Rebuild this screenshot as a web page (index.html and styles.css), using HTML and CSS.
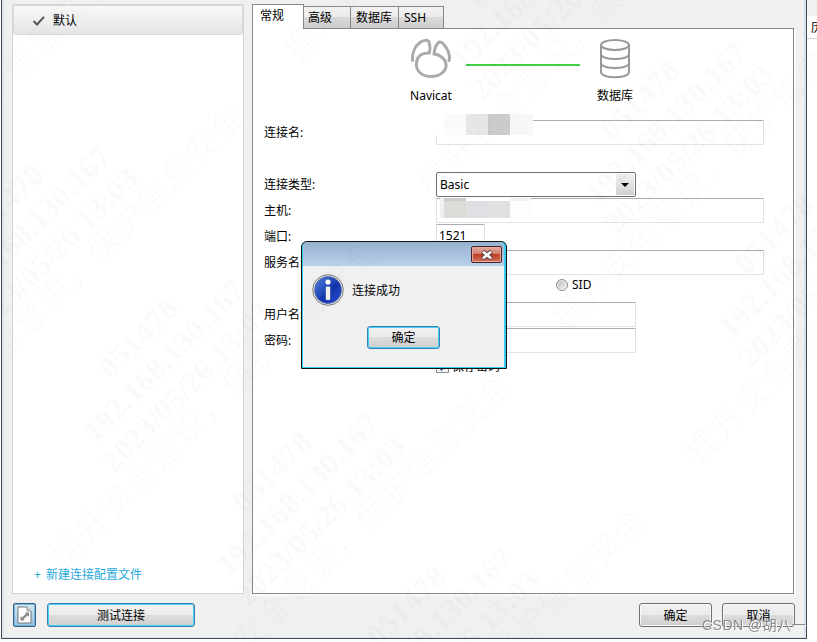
FILE: index.html
```
<!DOCTYPE html>
<html lang="zh-CN">
<head>
    <meta charset="UTF-8">
    <meta name="viewport" content="width=device-width, initial-scale=1.0">
    <title>Navicat</title>
    <link rel="stylesheet" href="styles.css">
</head>
<body>

<div class="desktop">
    <div class="window">
        <div class="main">
            <!-- Profiles -->
            <div class="sidebar">
                <div class="profile">
                    <svg width="14" height="12" viewBox="0 0 14 12"><path d="M1.5 6 5 9.5 12 1.8" fill="none" stroke="#555" stroke-width="2"/></svg>
                    <span>默认</span>
                </div>
                <div class="new-profile"><span class="plus">+</span>新建连接配置文件</div>
            </div>

            <!-- Tabs -->
            <div class="content">
                <div class="tabs">
                    <div class="tab active">常规</div>
                    <div class="tab tab-advanced">高级</div>
                    <div class="tab tab-database">数据库</div>
                    <div class="tab tab-ssh">SSH</div>
                </div>

                <div class="panel">
                    <div class="diagram">
                        <div class="node">
                            <svg width="42" height="42" viewBox="0 0 42 42" fill="none" stroke="#aaa" stroke-width="3" stroke-linecap="round" stroke-linejoin="round">
                                <path d="M2.500 22.500C2 15 5 8 10 4.500C13 2 18 1.500 19 4C20 7 20.500 11 19.500 15C12 14.500 7 18 6.500 25C5.500 33 12 38.500 21 38.500C30 38.500 37 33 36 26C35.500 21 30 16.500 24 16C24.500 11 26 7 28.500 4.500C31 2 36 8 38 13C39.500 17 40 20 39 22.500"/>
                            </svg>
                            <span>Navicat</span>
                        </div>
                        <div class="link-line"></div>
                        <div class="node">
                            <svg width="32" height="42" viewBox="0 0 32 42" fill="none" stroke="#999" stroke-width="2">
                                <ellipse cx="16" cy="7" rx="14" ry="5"/>
                                <path d="M2 7V34C2 41 30 41 30 34V7M2 16C2 22.700 30 22.700 30 16M2 25C2 31.700 30 31.700 30 25"/>
                            </svg>
                            <span>数据库</span>
                        </div>
                    </div>

                    <div class="form">
                        <div class="row row-name">
                            <label>连接名:</label>
                            <div class="input wide"></div>
                            <div class="mosaic mosaic-name"><i></i><i></i><i></i><i></i></div>
                        </div>
                        <div class="row">
                            <label>连接类型:</label>
                            <div class="select"><span>Basic</span><div class="arrow"></div></div>
                        </div>
                        <div class="row">
                            <label>主机:</label>
                            <div class="input wide"></div>
                            <div class="mosaic mosaic-host"><i></i><i></i><i></i><i></i></div>
                        </div>
                        <div class="row">
                            <label>端口:</label>
                            <div class="input port">1521</div>
                        </div>
                        <div class="row">
                            <label>服务名:</label>
                            <div class="input wide"></div>
                        </div>
                        <div class="row row-radio">
                            <div class="radio"></div>
                            <span>SID</span>
                        </div>
                        <div class="row">
                            <label>用户名:</label>
                            <div class="input medium"></div>
                        </div>
                        <div class="row">
                            <label>密码:</label>
                            <div class="input medium"></div>
                        </div>
                        <div class="row row-check">
                            <div class="checkbox"><svg width="11" height="11" viewBox="0 0 11 11"><path d="M2 5 4.500 8.500 9 2" fill="none" stroke="#3450a0" stroke-width="2"/></svg></div>
                            <span>保存密码</span>
                        </div>
                    </div>
                </div>
            </div>
        </div>

        <div class="footer">
            <div class="icon-button">
                <svg width="15" height="18" viewBox="0 0 15 18">
                    <path d="M1 1H10L14 5V17H1Z" fill="#fff" stroke="#777"/>
                    <path d="M10 1V5H14" fill="#ddd" stroke="#999"/>
                    <path d="M3.500 14.500V10L5 11.500 9 7.800 7.500 6.500H12V11L10.500 9.500 6.500 13.200 8 14.500Z" fill="#888"/>
                </svg>
            </div>
            <div class="button default test">测试连接</div>
            <div class="button ok">确定</div>
            <div class="button">取消</div>
        </div>
    </div>

    <div class="behind">
        <div class="behind-title"></div>
        <div class="behind-column">历</div>
    </div>
</div>

<!-- Message box -->
<div class="dialog">
    <div class="dialog-inner">
        <div class="dialog-title">
            <div class="close">
                <svg width="12" height="10" viewBox="0 0 12 10"><path d="M1.500 1.500 10.500 8.500M10.500 1.500 1.500 8.500" stroke="#5a4045" stroke-width="4.600"/><path d="M2 1.800 10 8.200M10 1.800 2 8.200" stroke="#fff" stroke-width="2.600"/></svg>
            </div>
        </div>
        <div class="message">
            <svg width="32" height="32" viewBox="0 0 32 32">
                <defs>
                    <linearGradient id="info" x1="0" y1="0" x2="1" y2="1">
                        <stop offset="0" stop-color="#5a83dc"/>
                        <stop offset=".45" stop-color="#1f48b8"/>
                        <stop offset=".55" stop-color="#1234a8"/>
                        <stop offset="1" stop-color="#2a50d8"/>
                    </linearGradient>
                </defs>
                <circle cx="16" cy="16" r="15.300" fill="#eee" stroke="#777"/>
                <circle cx="16" cy="16" r="13.500" fill="url(#info)" stroke="#46609c" stroke-width=".7"/>
                <circle cx="16" cy="8" r="2.600" fill="#fff"/>
                <rect x="13.800" y="12.500" width="4.400" height="13.500" rx="1" fill="#eee"/>
            </svg>
            <span>连接成功</span>
        </div>
        <div class="button default confirm">确定</div>
    </div>
</div>

<!-- Watermark -->
<svg class="watermark" width="817" height="642" viewBox="0 0 817 642">
    <defs>
        <g id="mark" text-anchor="middle">
            <g transform="rotate(-45)">
                <text y="10" textLength="98">051478</text>
            </g>
            <g transform="translate(26 23) rotate(-45)">
                <text y="10" textLength="214">192.168.130.167</text>
            </g>
            <g transform="translate(49 49) rotate(-45)">
                <text y="10" textLength="225">2023/05/26 13:03</text>
            </g>
            <g transform="translate(75 65) rotate(-45)">
                <text class="cjk" y="12" textLength="446">提升安全意识，保护信息安全</text>
            </g>
        </g>
    </defs>
    <use href="#mark" x="-130" y="70"/>
    <use href="#mark" x="4" y="204"/>
    <use href="#mark" x="138" y="338"/>
    <use href="#mark" x="272" y="472"/>
    <use href="#mark" x="406" y="606"/>
    <use href="#mark" x="372" y="-168"/>
    <use href="#mark" x="506" y="-34"/>
    <use href="#mark" x="640" y="100"/>
    <use href="#mark" x="774" y="234"/>
</svg>
<div class="signature">CSDN @胡八一</div>

</body>
</html>
```
FILE: styles.css
```
:root {
    --face: #f0f0f0;
    --edge: #828790;
    --link: #27a8dc;
}

* {
    box-sizing: border-box;
}

body {
    margin: 0;
    width: 817px;
    height: 642px;
    overflow: hidden;
    position: relative;
    background-color: #fff;
    color: #000;
    font-family: "Noto Sans", "Noto Sans CJK SC", sans-serif;
    font-size: 12px;
    line-height: 16px;
}

svg {
    display: block;
    flex: none;
}

.desktop {
    display: flex;
    height: 639px;
    padding-left: 1px;
}

.window {
    width: 806px;
    height: 639px;
    padding: 4px 9px 0 9px;
    background-color: var(--face);
    border: 1px solid #484b50;
    border-top: none;
    box-shadow: inset 2px 0 #dce6f3, inset -2px -1px #d3e1f2;
}

.main {
    display: flex;
    gap: 8px;
    padding-left: 1px;
    height: 590px;
}

/* Sidebar */
.sidebar {
    width: 232px;
    border: 1px solid #d5d5d5;
    background-color: #fff;
    display: flex;
    flex-direction: column;
    justify-content: space-between;
}

.profile {
    height: 30px;
    padding: 1px 0 0 18px;
    display: flex;
    align-items: center;
    gap: 7px;
    border: 1px solid #d9d9d9;
    border-radius: 3px;
    background: linear-gradient(#f8f8f8, #e5e5e5);
}

.new-profile {
    padding: 0 0 10px 21px;
    color: var(--link);
}

.plus {
    margin-right: 5px;
}

/* Tabs */
.content {
    width: 542px;
}

.tabs {
    display: flex;
    align-items: flex-end;
    height: 24px;
}

.tab {
    height: 22px;
    padding: 3px 0 0 4px;
    border: 1px solid var(--edge);
    border-left: none;
    border-bottom: none;
    background: linear-gradient(#f3f3f3 0, #ebebeb 48%, #dadada 50%, #cecece 100%);
}

.tab.active {
    width: 52px;
    height: 25px;
    margin-bottom: -1px;
    padding: 3px 0 0 7px;
    border-left: 1px solid var(--edge);
    background: #fff;
    position: relative;
}

.tab-advanced {
    width: 47px;
}

.tab-database {
    width: 48px;
    padding-left: 5px;
}

.tab-ssh {
    width: 45px;
    padding-left: 5px;
}

.panel {
    height: 566px;
    padding-left: 11px;
    border: 1px solid var(--edge);
    background-color: #fff;
    box-shadow: 2px 2px #fafafa;
}

.diagram {
    display: flex;
    height: 91px;
    padding: 9px 0 0 141px;
}

.node {
    width: 52px;
    display: flex;
    flex-direction: column;
    align-items: center;
    gap: 8px;
    white-space: nowrap;
}

.link-line {
    width: 114px;
    height: 2px;
    margin: 26px 9px 0 9px;
    background-color: #43cf48;
}

/* Form */
.row {
    display: flex;
    align-items: center;
    height: 25px;
    margin-bottom: 1px;
    position: relative;
}

.row label {
    width: 172px;
    white-space: nowrap;
}

.row-name {
    margin-bottom: 27px;
}

.input {
    height: 25px;
    padding: 3px 2px;
    border: 1px solid #dfe2e8;
    border-top-color: #abadb3;
    border-radius: 1px;
    background-color: #fff;
}

.wide {
    width: 328px;
}

.medium {
    width: 200px;
}

.port {
    width: 49px;
}

.select {
    width: 200px;
    height: 25px;
    padding: 1px 1px 1px 3px;
    display: flex;
    align-items: center;
    justify-content: space-between;
    border: 1px solid #707070;
    border-radius: 2px;
}

.arrow {
    width: 18px;
    height: 21px;
    display: flex;
    align-items: center;
    justify-content: center;
    background: linear-gradient(#f0f0f0, #d2d2d2);
}

.arrow:before {
    content: "";
    border: 4px solid transparent;
    border-top-color: #000;
    border-bottom: none;
}

/* Blurred out values */
.mosaic {
    position: absolute;
    display: flex;
}

.mosaic i {
    width: 22px;
}

.mosaic-name {
    left: 172px;
    top: -6px;
    height: 21px;
    padding-left: 8px;
    background-color: #fff;
}

.mosaic-name i:nth-child(1) { background-color: #fafafa; }
.mosaic-name i:nth-child(2) { background-color: #e7e7e7; }
.mosaic-name i:nth-child(3) { background-color: #cbcbcb; }
.mosaic-name i:nth-child(4) { width: 23px; background-color: #f7f7f7; }

.mosaic-host {
    left: 176px;
    top: 0;
    height: 20px;
    background-color: #fff;
}

.mosaic-host i:nth-child(1) { width: 4px; background-color: #f0f0f0; }
.mosaic-host i:nth-child(2) { background: linear-gradient(#cbcbcb 3px, #dbdbd8 3px); }
.mosaic-host i:nth-child(3) { width: 44px; margin-top: 3px; background: linear-gradient(90deg, #dfe0e4 50%, #e1e1e1 50%); }
.mosaic-host i:nth-child(4) { width: 21px; background: linear-gradient(#f3f3f3 3px, #fcfdfd 3px); }

.row-radio {
    padding: 0 0 8px 292px;
    gap: 4px;
}

.radio {
    width: 12px;
    height: 12px;
    border: 1px solid #8e8f8f;
    border-radius: 50%;
    background: linear-gradient(135deg, #b8bbbe, #f6f6f6);
    box-shadow: inset 0 0 0 1px #f0f0f0;
}

.row-check {
    padding-left: 172px;
    gap: 3px;
}

.checkbox {
    width: 13px;
    height: 13px;
    border: 1px solid #8e8f8f;
    background-color: #f4f4f4;
}

/* Buttons */
.footer {
    display: flex;
    padding: 9px 0 0 2px;
}

.button {
    width: 73px;
    height: 24px;
    padding-top: 1px;
    border: 1px solid #707070;
    border-radius: 3px;
    background: linear-gradient(#f2f2f2 0, #ebebeb 48%, #dddddd 50%, #cfcfcf 100%);
    box-shadow: inset 0 0 0 1px #f8f8f8;
    line-height: 22px;
    text-align: center;
}

.button.default {
    border-color: #3c7fb1;
    box-shadow: inset 0 0 0 1px #45d0f5;
}

.icon-button {
    width: 23px;
    height: 24px;
    display: flex;
    align-items: center;
    justify-content: center;
    border: 1px solid #2c628b;
    border-radius: 2px;
    background: linear-gradient(#d5e9f6, #93c2e2);
    box-shadow: inset 0 0 0 1px #82b5d5;
}

.test {
    width: 148px;
    margin-left: 11px;
}

.ok {
    margin: 0 10px 0 auto;
}

.footer .button:last-child {
    margin-right: 2px;
}

/* Window behind */
.behind {
    width: 10px;
    overflow: hidden;
}

.behind-title {
    height: 16px;
    background-color: var(--face);
}

.behind-column {
    width: 20px;
    height: 23px;
    padding: 4px 0 0 4px;
    border-bottom: 1px solid #d5d5d5;
}

/* Message box */
.dialog {
    position: absolute;
    left: 301px;
    top: 241px;
    width: 206px;
    height: 128px;
    border: 1px solid #111;
    border-radius: 6px 6px 0 0;
    background-color: #35cdf0;
}

.dialog-inner {
    height: 125px;
    margin: 0 2px 1px 1px;
    border-radius: 5px 5px 0 0;
    background-color: var(--face);
    overflow: hidden;
}

.dialog-title {
    display: flex;
    justify-content: flex-end;
    height: 24px;
    padding: 4px 2px 0 0;
    background: linear-gradient(#96b1d0, #b9d1ea);
}

.close {
    width: 31px;
    height: 17px;
    display: flex;
    align-items: center;
    justify-content: center;
    border: 1px solid #4c2229;
    border-radius: 2px;
    background: linear-gradient(#e5a89d 0, #d37c6c 48%, #bd3c22 50%, #d27460 100%);
    box-shadow: inset 0 0 0 1px #e3aaa0;
}

.message {
    display: flex;
    align-items: center;
    gap: 8px;
    padding: 8px 0 0 9px;
}

.message span {
    padding-top: 2px;
}

.confirm {
    height: 23px;
    padding-top: 0;
    margin: 20px 0 0 64px;
}

/* Watermark */
.watermark {
    position: absolute;
    left: 0;
    top: 0;
    pointer-events: none;
    fill: #000;
    opacity: 0.022;
    font-family: "Liberation Serif", serif;
    font-size: 31px;
    font-weight: bold;
}

.cjk {
    font-family: "Noto Sans CJK SC", sans-serif;
    font-size: 32px;
    font-weight: 300;
}

.signature {
    position: absolute;
    left: 702px;
    top: 615px;
    color: #8b8b8b;
    font-family: "Liberation Sans", "Noto Sans CJK SC", sans-serif;
    font-size: 14px;
    letter-spacing: 0.5px;
    line-height: 20px;
    white-space: nowrap;
    text-shadow: 1px 1px #fff;
}
```
